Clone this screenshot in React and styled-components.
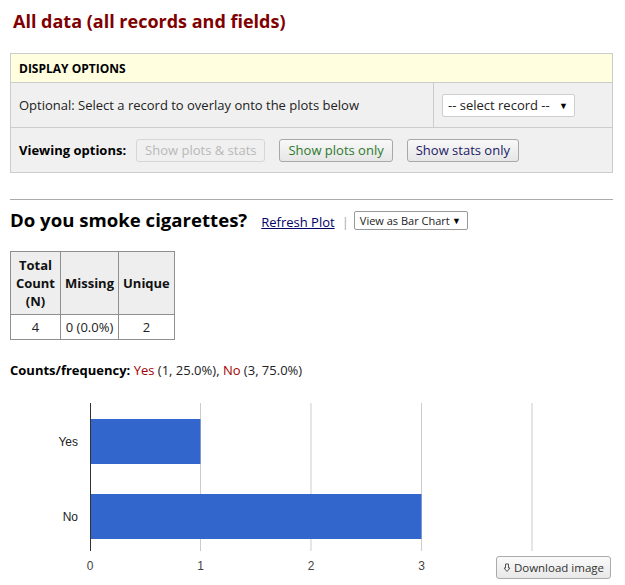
import React from "react";
import styled, { createGlobalStyle } from "styled-components";

const GlobalStyle = createGlobalStyle`
  body {
    margin: 0;
    background: #fff;
    font-family: "Open Sans", "Liberation Sans", Arial, sans-serif;
    font-size: 13px;
    color: #000;
  }
`;

const Page = styled.div`
  width: 603px;
  padding: 9px 10px 0 10px;
`;

const Title = styled.h1`
  margin: 0 0 0 3px;
  font-size: 18px;
  line-height: 24px;
  font-weight: 700;
  color: #800000;
`;

const Panel = styled.div`
  margin-top: 20px;
  border: 1px solid #cccccc;
  background: #f0f0f0;
`;

const PanelHeader = styled.div`
  background: #ffffe0;
  border-bottom: 1px solid #cccccc;
  padding: 0 8px;
  height: 28px;
  display: flex;
  align-items: center;
  font-size: 12px;
  font-weight: 700;
`;

const PanelRow = styled.div`
  display: flex;
  align-items: stretch;
  min-height: 44px;
  border-top: ${(p) => (p.$first ? "none" : "1px solid #cccccc")};
`;

const RowLabel = styled.div`
  flex: 1;
  display: flex;
  align-items: center;
  padding: 0 8px;
  color: #222;
`;

const RowSide = styled.div`
  width: 170px;
  border-left: 1px solid #cccccc;
  display: flex;
  align-items: center;
  padding-left: 8px;
`;

const FakeSelect = styled.div`
  display: flex;
  align-items: center;
  justify-content: space-between;
  box-sizing: border-box;
  width: ${(p) => p.$w}px;
  height: ${(p) => p.$h}px;
  padding: 0 6px 0 5px;
  background: #fff;
  border: 1px solid ${(p) => p.$border};
  border-radius: 2px;
  font-size: ${(p) => p.$fs}px;
  color: #222;
  span.arrow {
    font-size: 9px;
    color: #000;
  }
`;

const ViewRow = styled.div`
  display: flex;
  align-items: center;
  gap: 14px;
  padding: 0 8px;
  height: 44px;
`;

const ViewLabel = styled.span`
  font-weight: 700;
  margin-right: -4px;
`;

const Button = styled.button`
  font-family: "Open Sans", "Liberation Sans", Arial, sans-serif;
  font-size: 13px;
  height: 23px;
  padding: 0 8px;
  border-radius: 3px;
  border: 1px solid ${(p) => (p.disabled ? "#d6d6d6" : "#a8a8a8")};
  background: ${(p) =>
    p.disabled ? "#f0f0f0" : "linear-gradient(#f8f8f8, #e6e6e6)"};
  color: ${(p) => p.$color};
  cursor: ${(p) => (p.disabled ? "default" : "pointer")};
`;

const Rule = styled.hr`
  margin: 26px 0 0 0;
  border: none;
  border-top: 1px solid #aaaaaa;
`;

const QuestionBar = styled.div`
  display: flex;
  align-items: center;
  margin-top: 8px;
  height: 24px;
`;

const Question = styled.h2`
  margin: 0;
  font-size: 18.6px;
  font-weight: 700;
  line-height: 24px;
  color: #000;
`;

const RefreshLink = styled.a`
  margin-left: 14px;
  margin-top: 3px;
  color: #000066;
  text-decoration: underline;
  cursor: pointer;
`;

const Pipe = styled.span`
  margin: 3px 5px 0 7px;
  color: #aaa;
`;

const StatsTable = styled.table`
  margin-top: 19px;
  border-collapse: collapse;
  th,
  td {
    border: 1px solid #8f8f8f;
    padding: 4px 4px;
    text-align: center;
    line-height: 18px;
  }
  th {
    background: #eeeeee;
    font-weight: 700;
    color: #111;
  }
  td {
    background: #fff;
    padding: 3px 4px;
    color: #222;
  }
`;

const Counts = styled.div`
  margin-top: 21px;
  font-size: 13px;
  color: #222;
  b {
    color: #000;
  }
  span {
    color: #a00000;
  }
`;

const ChartWrap = styled.div`
  position: relative;
  margin-top: 12px;
  height: 188px;
`;

const DownloadButton = styled.button`
  position: absolute;
  right: 2px;
  bottom: 0;
  height: 23px;
  padding: 0 6px;
  font-family: "Open Sans", "Liberation Sans", Arial, sans-serif;
  font-size: 11.5px;
  color: #333;
  border: 1px solid #aaa;
  border-radius: 3px;
  background: linear-gradient(#fafafa, #e8e8e8);
  display: flex;
  align-items: center;
  gap: 3px;
`;

const bars = [
  { label: "Yes", value: 1, y: 28 },
  { label: "No", value: 3, y: 103 },
];

const unit = 110.5;
const x0 = 80;

const BarChart = () => (
  <svg width="603" height="188" style={{ display: "block" }}>
    {[1, 2, 3, 4].map((t) => (
      <line
        key={t}
        x1={x0 + t * unit}
        x2={x0 + t * unit}
        y1={12}
        y2={160}
        stroke="#cccccc"
        strokeWidth="1"
      />
    ))}
    {bars.map((b) => (
      <g key={b.label}>
        <rect x={x0} y={b.y} width={b.value * unit} height={45} fill="#3366cc" />
        <text
          x={x0 - 12}
          y={b.y + 27}
          textAnchor="end"
          fontFamily="Liberation Sans, Arial, sans-serif"
          fontSize="12"
          fill="#222"
        >
          {b.label}
        </text>
      </g>
    ))}
    <line x1={x0 + 0.5} x2={x0 + 0.5} y1={12} y2={160} stroke="#333" strokeWidth="1" />
    {[0, 1, 2, 3].map((t) => (
      <text
        key={t}
        x={x0 + t * unit}
        y={179}
        textAnchor="middle"
        fontFamily="Liberation Sans, Arial, sans-serif"
        fontSize="12"
        fill="#444"
      >
        {t}
      </text>
    ))}
  </svg>
);

const DownloadIcon = () => (
  <svg width="8" height="10" viewBox="0 0 8 10">
    <path
      d="M2.5 1h3v4h1.5L4 8.5 1 5h1.5z"
      fill="none"
      stroke="#555"
      strokeWidth="1"
      strokeLinejoin="round"
    />
  </svg>
);

export default function App() {
  return (
    <Page>
      <GlobalStyle />
      <Title>All data (all records and fields)</Title>

      <Panel>
        <PanelHeader>DISPLAY OPTIONS</PanelHeader>
        <PanelRow $first>
          <RowLabel>Optional: Select a record to overlay onto the plots below</RowLabel>
          <RowSide>
            <FakeSelect $w={133} $h={23} $fs={13} $border="#cfcfcf">
              -- select record --
              <span className="arrow">▼</span>
            </FakeSelect>
          </RowSide>
        </PanelRow>
        <PanelRow>
          <ViewRow>
            <ViewLabel>Viewing options:</ViewLabel>
            <Button disabled $color="#b8b8b8">Show plots &amp; stats</Button>
            <Button $color="#2c7a2c">Show plots only</Button>
            <Button $color="#1a1a66">Show stats only</Button>
          </ViewRow>
        </PanelRow>
      </Panel>

      <Rule />

      <QuestionBar>
        <Question>Do you smoke cigarettes?</Question>
        <RefreshLink>Refresh Plot</RefreshLink>
        <Pipe>|</Pipe>
        <FakeSelect $w={114} $h={19} $fs={11} $border="#999">
          View as Bar Chart
          <span className="arrow">▼</span>
        </FakeSelect>
      </QuestionBar>

      <StatsTable>
        <thead>
          <tr>
            <th style={{ width: 41 }}>Total Count (N)</th>
            <th>Missing</th>
            <th>Unique</th>
          </tr>
        </thead>
        <tbody>
          <tr>
            <td>4</td>
            <td>0 (0.0%)</td>
            <td>2</td>
          </tr>
        </tbody>
      </StatsTable>

      <Counts>
        <b>Counts/frequency:</b> <span>Yes</span> (1, 25.0%), <span>No</span> (3, 75.0%)
      </Counts>

      <ChartWrap>
        <BarChart />
        <DownloadButton>
          <DownloadIcon />
          Download image
        </DownloadButton>
      </ChartWrap>
    </Page>
  );
}
